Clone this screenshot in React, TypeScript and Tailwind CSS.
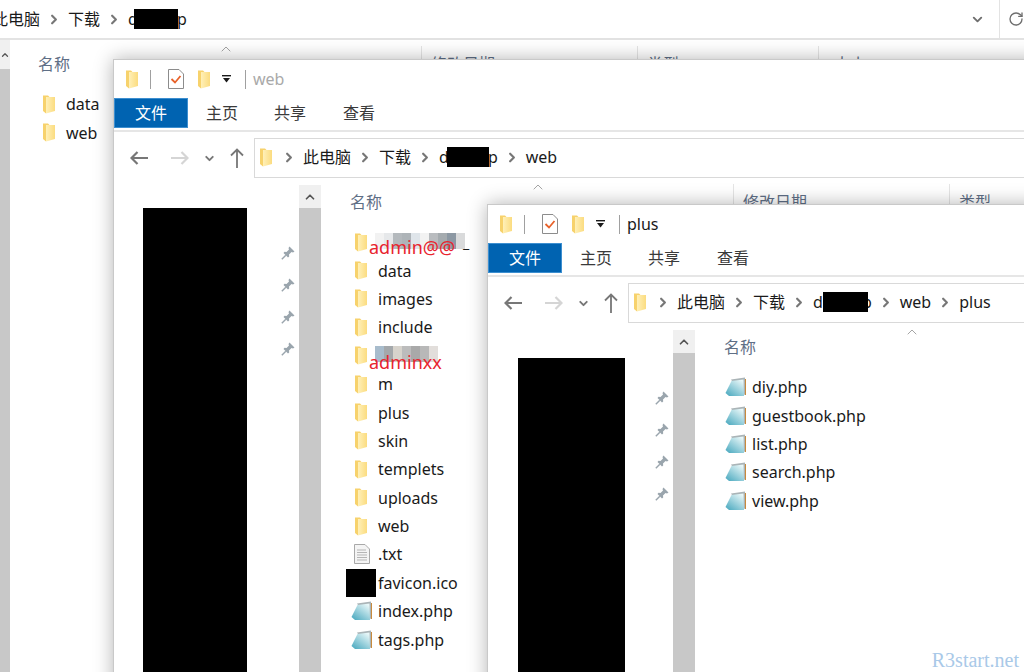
import { ReactNode } from "react";
import { ChevronDown, ChevronRight, ChevronUp, RotateCw } from "lucide-react";

type FileKind = "folder" | "txt" | "php" | "hidden";

type FileRow = {
  name: string;
  kind: FileKind;
  mosaic?: string[];
  mosaicTop?: number;
  label?: string;
  labelTop?: number;
};

const webFiles: FileRow[] = [
  {
    name: "",
    kind: "folder",
    label: "admin@@",
    labelTop: 7,
    mosaicTop: 5,
    mosaic: ["#f2f2f2", "#e6e8ea", "#b4b9bd", "#aeb4b8", "#dfe5ea", "#f2f2f2", "#b9bcbf", "#a5abaf", "#8c98a3", "#d9dadb"],
  },
  { name: "data", kind: "folder" },
  { name: "images", kind: "folder" },
  { name: "include", kind: "folder" },
  {
    name: "",
    kind: "folder",
    label: "adminxx",
    labelTop: 8,
    mosaicTop: 4,
    mosaic: ["#a8bccc", "#a4a8ab", "#d7d3cc", "#bcbcbc", "#a9a9a9", "#b8b8b8", "#e2dedb"],
  },
  { name: "m", kind: "folder" },
  { name: "plus", kind: "folder" },
  { name: "skin", kind: "folder" },
  { name: "templets", kind: "folder" },
  { name: "uploads", kind: "folder" },
  { name: "web", kind: "folder" },
  { name: ".txt", kind: "txt" },
  { name: "favicon.ico", kind: "hidden" },
  { name: "index.php", kind: "php" },
  { name: "tags.php", kind: "php" },
];

const plusFiles: FileRow[] = [
  { name: "diy.php", kind: "php" },
  { name: "guestbook.php", kind: "php" },
  { name: "list.php", kind: "php" },
  { name: "search.php", kind: "php" },
  { name: "view.php", kind: "php" },
];

const rootFiles: FileRow[] = [
  { name: "data", kind: "folder" },
  { name: "web", kind: "folder" },
];

function FolderIcon() {
  return (
    <svg width="13" height="19" viewBox="0 0 13 19" className="shrink-0">
      <defs>
        <linearGradient id="folderFace" x1="0" y1="0" x2="1" y2="0">
          <stop offset="0" stopColor="#fff0b8" />
          <stop offset="1" stopColor="#fbdc80" />
        </linearGradient>
      </defs>
      <polygon points="3,2 12,2 12,16 3,18.5" fill="url(#folderFace)" />
      <polygon points="0,0.5 5,0.5 6.5,2 3,2 3,18.5 0,16" fill="#f7d26c" />
    </svg>
  );
}

function PhpIcon() {
  return (
    <svg width="22" height="20" viewBox="0 0 22 20" className="shrink-0">
      <defs>
        <linearGradient id="phpFace" x1="0" y1="1" x2="0.8" y2="0">
          <stop offset="0" stopColor="#44a6bd" />
          <stop offset="1" stopColor="#e8f7f8" />
        </linearGradient>
      </defs>
      <polygon points="6,2.5 20,0.5 21,17 17,19" fill="#aab4b7" />
      <line x1="20.5" y1="2" x2="20.5" y2="18" stroke="#c88a3c" strokeWidth="1" />
      <polygon points="0.5,16 6.5,4 18.5,2.5 19,19 4,19" fill="url(#phpFace)" />
    </svg>
  );
}

function TxtIcon() {
  return (
    <svg width="16" height="20" viewBox="0 0 16 20" className="shrink-0">
      <path d="M0.5 0.5H11L15.5 5V19.5H0.5Z" fill="#f4f4f4" stroke="#a9a9a9" />
      <path d="M3 6H12M3 8.5H13M3 11H13M3 13.5H13M3 16H13" stroke="#b5b5b5" strokeWidth="1" />
    </svg>
  );
}

function CheckDocIcon() {
  return (
    <svg width="16" height="20" viewBox="0 0 16 20" className="shrink-0">
      <path d="M0.5 0.5H11L15.5 5V19.5H0.5Z" fill="#ffffff" stroke="#8c8c8c" />
      <path d="M3.5 10L7 13.5L12.5 7" fill="none" stroke="#e8622a" strokeWidth="1.8" />
    </svg>
  );
}

function PinIcon() {
  return (
    <svg width="14" height="14" viewBox="0 0 14 14" className="shrink-0">
      <path d="M8.5 0.5L13.5 5.5L12 6.5L10.5 6L8 8.5L8.2 10.5L7 11.5L2.5 7L3.5 5.8L5.5 6L8 3.5L7.5 2Z" fill="#9aa5ad" />
      <path d="M4.8 9.2L0.8 13.2" stroke="#9aa5ad" strokeWidth="1.4" />
    </svg>
  );
}

function QuickDrop() {
  return (
    <svg width="9" height="8" viewBox="0 0 9 8" className="shrink-0">
      <rect x="0" y="0" width="9" height="1.4" fill="#1a1a1a" />
      <polygon points="1,3 8,3 4.5,7.5" fill="#1a1a1a" />
    </svg>
  );
}

function HorizontalArrow({ dir, color }: { dir: "left" | "right"; color: string }) {
  return (
    <svg width="18" height="14" viewBox="0 0 18 14" fill="none" stroke={color} strokeWidth="2.2">
      {dir === "left" ? <path d="M18 7H1.5M7.5 1L1.5 7L7.5 13" /> : <path d="M0 7H16.5M10.5 1L16.5 7L10.5 13" />}
    </svg>
  );
}

function UpArrow() {
  return (
    <svg width="14" height="20" viewBox="0 0 14 20" fill="none" stroke="#777777" strokeWidth="1.8">
      <path d="M7 20V1.5M1 7.5L7 1.5L13 7.5" />
    </svg>
  );
}

function Sep() {
  return <ChevronRight size={15} strokeWidth={3.5} className="w-[28px] shrink-0 text-[#777777]" />;
}

// 中间被涂黑的目录名
function Crumbs({ trail, black, shift }: { trail: string[]; black: number; shift: number }) {
  return (
    <div className="flex items-center text-[16px] text-[#1a1a1a]">
      <span>此电脑</span>
      <Sep />
      <span>下载</span>
      <Sep />
      <span>d</span>
      <span className="relative -ml-[3px] h-[20px] w-[44px]">
        <span className="absolute top-0 h-[20px] bg-black" style={{ left: shift, width: black }} />
      </span>
      <span className="-ml-[2px]">p</span>
      {trail.map((t) => (
        <span key={t} className="flex items-center">
          <Sep />
          <span>{t}</span>
        </span>
      ))}
    </div>
  );
}

function Row({ file }: { file: FileRow }) {
  return (
    <div className="relative flex h-[28.4px] items-center text-[16px] text-[#1a1a1a]">
      <div className="flex w-[23px] justify-center">
        {file.kind === "folder" && <FolderIcon />}
        {file.kind === "php" && <PhpIcon />}
        {file.kind === "txt" && <TxtIcon />}
        {file.kind === "hidden" && <div className="h-[28px] w-[30px] shrink-0 -translate-x-[1px] bg-black" />}
      </div>
      <span className="ml-[5px]">{file.name}</span>
      {file.mosaic && (
        <div className="absolute left-[25px] flex" style={{ top: file.mosaicTop }}>
          {file.mosaic.map((c, i) => (
            <div key={i} className="h-[16px] w-[9px]" style={{ backgroundColor: c }} />
          ))}
        </div>
      )}
      {file.label && (
        <span className="absolute left-[19px] text-[18px] leading-[24px] text-[#e8242e]" style={{ top: file.labelTop }}>
          {file.label}
        </span>
      )}
      {file.label === "admin@@" && <span className="absolute left-[113px] top-[4px] text-[14px]">_</span>}
    </div>
  );
}

function ColumnHeader() {
  return (
    <div className="relative flex h-[26px] items-center text-[16px] leading-[26px] text-[#5f6f86]">
      <span>名称</span>
      <ChevronUp size={16} strokeWidth={1} className="absolute left-[180px] -top-[10px] text-[#777777]" />
      <div className="absolute left-[383px] -top-[5px] h-[25px] w-px bg-[#e5e5e5]" />
      <span className="absolute left-[393px] top-0">修改日期</span>
      <div className="absolute left-[599px] -top-[5px] h-[25px] w-px bg-[#e5e5e5]" />
      <span className="absolute left-[609px] top-0">类型</span>
      <div className="absolute left-[780px] -top-[5px] h-[25px] w-px bg-[#e5e5e5]" />
      <span className="absolute left-[796px] top-0">大小</span>
    </div>
  );
}

function FileList({ files }: { files: FileRow[] }) {
  return (
    <div className="flex flex-1 flex-col">
      <ColumnHeader />
      <div className="mt-[13px]">
        {files.map((f, i) => (
          <Row key={i} file={f} />
        ))}
      </div>
    </div>
  );
}

type WindowProps = {
  left: number;
  top: number;
  title: string;
  active?: boolean;
  trail: string[];
  blackLeft: number;
  blackTop: number;
  blackWidth: number;
  crumbBlack: number;
  crumbShift: number;
  files: FileRow[];
};

function ExplorerWindow({ left, top, title, active, trail, blackLeft, blackTop, blackWidth, crumbBlack, crumbShift, files }: WindowProps) {
  return (
    <div
      className="absolute flex h-[760px] w-[1000px] flex-col border border-[#c9c9c9] bg-white shadow-[0_0_18px_rgba(0,0,0,0.3)]"
      style={{ left, top }}
    >
      <div className="flex h-[38px] shrink-0 items-center pl-[12px]">
        <FolderIcon />
        <div className="ml-[11px] h-[19px] w-px bg-[#a0a0a0]" />
        <div className="ml-[17px]">
          <CheckDocIcon />
        </div>
        <div className="ml-[14px]">
          <FolderIcon />
        </div>
        <div className="ml-[11px]">
          <QuickDrop />
        </div>
        <div className="ml-[14px] h-[19px] w-px bg-[#a0a0a0]" />
        <span className={active ? "ml-[7px] text-[16px] text-[#1a1a1a]" : "ml-[7px] text-[16px] text-[#a9a9a9]"}>{title}</span>
      </div>

      <div className="flex h-[34px] shrink-0 items-start border-b-2 border-[#e6e6e6] text-[16px] text-[#3a3a3a]">
        <div className="flex h-[30px] w-[74px] items-center justify-center border border-[#3d8fd0] bg-[#0063b1] text-white">文件</div>
        <div className="ml-[18px] flex h-[30px] items-center">主页</div>
        <div className="ml-[36px] flex h-[30px] items-center">共享</div>
        <div className="ml-[37px] flex h-[30px] items-center">查看</div>
      </div>

      <div className="flex h-[46px] shrink-0 items-end">
        <div className="flex h-[40px] w-[140px] items-center">
          <div className="flex w-[50px] justify-center">
            <HorizontalArrow dir="left" color="#777777" />
          </div>
          <div className="flex w-[32px] justify-center">
            <HorizontalArrow dir="right" color="#d5d5d5" />
          </div>
          <div className="flex w-[27px] justify-center">
            <ChevronDown size={13} strokeWidth={3.5} className="text-[#777777]" />
          </div>
          <div className="flex w-[28px] justify-center">
            <UpArrow />
          </div>
        </div>
        <div className="flex h-[40px] flex-1 items-center border border-[#d9d9d9] pb-[2px] pl-[5px]">
          <FolderIcon />
          <div className="ml-[2px] flex">
            <Sep />
          </div>
          <Crumbs trail={trail} black={crumbBlack} shift={crumbShift} />
        </div>
      </div>

      <div className="flex min-h-0 flex-1 pt-[7px]">
        <div className="relative flex w-[185px] shrink-0">
          <div className="absolute bottom-0 bg-black" style={{ left: blackLeft, top: blackTop, width: blackWidth }} />
          <div className="ml-[167px] flex flex-col gap-[18px] pt-[61px]">
            <PinIcon />
            <PinIcon />
            <PinIcon />
            <PinIcon />
          </div>
        </div>
        <div className="flex w-[22px] shrink-0 flex-col bg-[#c8c8c8]">
          <div className="flex h-[23px] items-center justify-center bg-[#f0f0f0] text-[#555555]">
            <ChevronUp size={14} strokeWidth={3} />
          </div>
        </div>
        <div className="ml-[29px] flex flex-1 flex-col pt-[4px]">
          <FileList files={files} />
        </div>
      </div>
    </div>
  );
}

export default function App(): ReactNode {
  return (
    <div className="relative h-[672px] w-[1024px] overflow-hidden bg-white font-['Noto_Sans','Noto_Sans_CJK_SC',sans-serif]">
      {/* 最底层窗口 */}
      <div className="flex h-[40px] items-center border-b-2 border-[#e3e3e3]">
        <div className="-ml-[8px] flex-1">
          <Crumbs trail={[]} black={44} shift={-1} />
        </div>
        <ChevronDown size={15} strokeWidth={3} className="mr-[14px] text-[#6e6e6e]" />
        <div className="h-[40px] w-px bg-[#e3e3e3]" />
        <RotateCw size={16} strokeWidth={2} className="ml-[8px] shrink-0 text-[#6e6e6e]" />
      </div>
      <div className="flex h-[632px]">
        <div className="flex w-[10px] shrink-0 flex-col">
          <div className="flex h-[29px] items-center justify-center bg-[#f0f0f0] text-[#555555]">
            <ChevronUp size={12} strokeWidth={3} />
          </div>
          <div className="flex-1 bg-[#c8c8c8]" />
        </div>
        <div className="ml-[28px] flex flex-1 pt-[11px]">
          <FileList files={rootFiles} />
        </div>
      </div>

      <ExplorerWindow
        left={113}
        top={59}
        title="web"
        trail={["web"]}
        blackLeft={29}
        blackTop={23}
        blackWidth={104}
        crumbBlack={42}
        crumbShift={1}
        files={webFiles}
      />
      <ExplorerWindow
        left={487}
        top={204}
        active
        title="plus"
        trail={["web", "plus"]}
        blackLeft={30}
        blackTop={28}
        blackWidth={107}
        crumbBlack={45}
        crumbShift={3}
        files={plusFiles}
      />

      <span className="absolute bottom-[-1px] right-[5px] font-['Liberation_Serif',serif] text-[20px] leading-[26px] text-[#a9c9e8]">
        R3start.net
      </span>
    </div>
  );
}
